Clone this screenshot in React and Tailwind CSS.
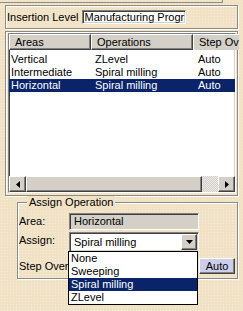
import React from "react";

const etched = "border border-[#8c8a84] shadow-[1px_1px_0_#fff,inset_1px_1px_0_#fff]";
const sunken = "border border-t-[#808080] border-l-[#808080] border-b-white border-r-white shadow-[inset_1px_1px_0_#404040,inset_-1px_-1px_0_#d4d0c8]";
const raised = "border border-t-white border-l-white border-b-[#404040] border-r-[#404040] shadow-[inset_-1px_-1px_0_#808080]";

const rows = [
  { area: "Vertical", op: "ZLevel", step: "Auto" },
  { area: "Intermediate", op: "Spiral milling", step: "Auto" },
  { area: "Horizontal", op: "Spiral milling", step: "Auto", selected: true },
];

const choices = ["None", "Sweeping", "Spiral milling", "ZLevel"];

function Arrow({ dir }) {
  return (
    <div className={`flex h-[16px] w-[17px] shrink-0 items-center justify-center bg-[#d4d0c8] ${raised}`}>
      <svg width="4" height="7" viewBox="0 0 4 7">
        {dir === "left" ? <path d="M4 0 L0 3.5 L4 7 Z" fill="#000" /> : <path d="M0 0 L4 3.5 L0 7 Z" fill="#000" />}
      </svg>
    </div>
  );
}

export default function App() {
  return (
    <div className="relative h-[311px] w-[243px] overflow-hidden bg-[#f1e2c6] bg-[radial-gradient(#f7ecd9_1px,transparent_1px)] bg-[length:3px_3px] font-['Liberation_Sans',Arial,sans-serif] text-[11px] leading-[13px] text-black">
      <div className="h-[3px] w-[223px] border-b border-r border-[#8c8a84]" />

      <div className={`ml-[5px] mt-[2px] flex h-[24px] w-[233px] items-center ${etched}`}>
        <span className="pl-[1px]">Insertion Level</span>
        <div className={`ml-[3px] flex h-[14px] w-[104px] items-center whitespace-nowrap bg-white pl-[2px] ${sunken}`}>
          Manufacturing Progr
        </div>
      </div>

      <div className={`ml-[5px] mt-[2px] h-[165px] w-[233px] pl-[2px] pr-[1px] pt-[1px] ${etched}`}>
        <div className={`flex h-[160px] flex-col bg-white ${sunken}`}>
          <div className="flex h-[16px] shrink-0 whitespace-nowrap">
            <div className={`flex w-[82px] shrink-0 items-center bg-[#d4d0c8] pl-[5px] ${raised}`}>Areas</div>
            <div className={`flex w-[102px] shrink-0 items-center bg-[#d4d0c8] pl-[5px] ${raised}`}>Operations</div>
            <div className={`flex flex-1 items-center border-l border-t border-white bg-[#d4d0c8] pl-[5px]`}>Step Ov</div>
          </div>
          <div className="mt-[3px] flex-1">
            {rows.map((r) => (
              <div
                key={r.area}
                className={`flex h-[13px] items-center whitespace-nowrap ${r.selected ? "bg-[#0a246a] text-white" : ""}`}
              >
                <span className="w-[86px] shrink-0 pl-[2px]">{r.area}</span>
                <span className="w-[103px] shrink-0">{r.op}</span>
                <span>{r.step}</span>
              </div>
            ))}
          </div>
          <div className="flex h-[16px] shrink-0">
            <Arrow dir="left" />
            <div className={`w-[176px] shrink-0 bg-[#d4d0c8] ${raised}`} />
            <div className="flex-1 bg-[#eceae6] bg-[linear-gradient(45deg,#d4d0c8_25%,transparent_25%,transparent_75%,#d4d0c8_75%),linear-gradient(45deg,#d4d0c8_25%,transparent_25%,transparent_75%,#d4d0c8_75%)] bg-[length:2px_2px] bg-[position:0_0,1px_1px]" />
            <Arrow dir="right" />
          </div>
        </div>
      </div>

      <div className={`relative ml-[17px] mt-[6px] h-[77px] w-[221px] pl-[1px] pt-[10px] ${etched}`}>
        <span className="absolute left-[9px] top-[-7px] bg-[#f1e2c6] px-[2px] text-[11px]">Assign Operation</span>
        <div className="flex items-center">
          <span className="w-[50px] shrink-0">Area:</span>
          <div className={`flex h-[17px] w-[130px] items-center bg-[#d4d0c8] pl-[4px] ${sunken}`}>Horizontal</div>
        </div>
        <div className="mt-[2px] flex items-center">
          <span className="w-[50px] shrink-0 self-start pt-[2px]">Assign:</span>
          <div className={`flex h-[20px] w-[130px] items-center justify-between bg-white pl-[4px] pr-[1px] ${sunken}`}>
            <span>Spiral milling</span>
            <div className={`flex h-[16px] w-[16px] items-center justify-center bg-[#d4d0c8] ${raised}`}>
              <svg width="7" height="4" viewBox="0 0 7 4">
                <path d="M0 0 H7 L3.5 4 Z" fill="#000" />
              </svg>
            </div>
          </div>
        </div>
        <div className="mt-[6px] flex items-center">
          <span className="w-[50px] shrink-0 whitespace-nowrap">Step Over</span>
          <div className="w-[130px] shrink-0" />
          <div className={`flex h-[16px] w-[36px] items-center justify-center bg-[#ccceea] ${raised}`}>Auto</div>
        </div>
      </div>

      <div className="absolute left-[68px] top-[251px] w-[130px] border border-black bg-white">
        {choices.map((c) => (
          <div
            key={c}
            className={`flex h-[13px] items-center pl-[2px] ${c === "Spiral milling" ? "bg-[#0a246a] text-white" : ""}`}
          >
            {c}
          </div>
        ))}
      </div>
    </div>
  );
}
